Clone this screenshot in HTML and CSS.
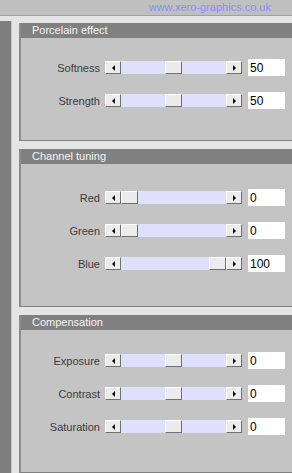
FILE: index.html
```html
<!DOCTYPE html>
<html lang="en">
<head>
    <meta charset="UTF-8">
    <meta name="viewport" content="width=device-width, initial-scale=1.0">
    <title>Porcelain</title>
    <link rel="stylesheet" href="styles.css">
</head>
<body>
    <div class="topbar">
        <span class="site">www.xero-graphics.co.uk</span>
    </div>
    <div class="frame">
        <div class="sidebar"></div>
        <div class="panels">

            <div class="section porcelain">
                <div class="section-title">Porcelain effect</div>
                <div class="rows">
                    <div class="row">
                        <label>Softness</label>
                        <div class="slider">
                            <span class="arrow left"></span>
                            <div class="track"><span class="thumb" style="left: 44px"></span></div>
                            <span class="arrow right"></span>
                        </div>
                        <input type="text" value="50">
                    </div>
                    <div class="row">
                        <label>Strength</label>
                        <div class="slider">
                            <span class="arrow left"></span>
                            <div class="track"><span class="thumb" style="left: 44px"></span></div>
                            <span class="arrow right"></span>
                        </div>
                        <input type="text" value="50">
                    </div>
                </div>
            </div>

            <div class="section channel">
                <div class="section-title">Channel tuning</div>
                <div class="rows">
                    <div class="row">
                        <label>Red</label>
                        <div class="slider">
                            <span class="arrow left"></span>
                            <div class="track"><span class="thumb" style="left: 0px"></span></div>
                            <span class="arrow right"></span>
                        </div>
                        <input type="text" value="0">
                    </div>
                    <div class="row">
                        <label>Green</label>
                        <div class="slider">
                            <span class="arrow left"></span>
                            <div class="track"><span class="thumb" style="left: 0px"></span></div>
                            <span class="arrow right"></span>
                        </div>
                        <input type="text" value="0">
                    </div>
                    <div class="row">
                        <label>Blue</label>
                        <div class="slider">
                            <span class="arrow left"></span>
                            <div class="track"><span class="thumb" style="left: 88px"></span></div>
                            <span class="arrow right"></span>
                        </div>
                        <input type="text" value="100">
                    </div>
                </div>
            </div>

            <div class="section compensation">
                <div class="section-title">Compensation</div>
                <div class="rows">
                    <div class="row">
                        <label>Exposure</label>
                        <div class="slider">
                            <span class="arrow left"></span>
                            <div class="track"><span class="thumb" style="left: 44px"></span></div>
                            <span class="arrow right"></span>
                        </div>
                        <input type="text" value="0">
                    </div>
                    <div class="row">
                        <label>Contrast</label>
                        <div class="slider">
                            <span class="arrow left"></span>
                            <div class="track"><span class="thumb" style="left: 44px"></span></div>
                            <span class="arrow right"></span>
                        </div>
                        <input type="text" value="0">
                    </div>
                    <div class="row">
                        <label>Saturation</label>
                        <div class="slider">
                            <span class="arrow left"></span>
                            <div class="track"><span class="thumb" style="left: 44px"></span></div>
                            <span class="arrow right"></span>
                        </div>
                        <input type="text" value="0">
                    </div>
                </div>
            </div>

        </div>
    </div>
</body>
</html>
```

FILE: styles.css
```css
* {
    box-sizing: border-box;
}
body {
    margin: 0;
    width: 292px;
    height: 473px;
    overflow: hidden;
    font-family: 'Liberation Sans', Arial, sans-serif;
    background-color: #c0c0c0;
}
.topbar {
    height: 16px;
    border-bottom: 1px solid #a0a0a0;
    display: flex;
    justify-content: flex-end;
    padding-right: 21px;
}
.site {
    font-size: 11px;
    line-height: 15px;
    color: #8c8cff;
}
.frame {
    display: flex;
    padding-top: 5px;
    background-color: #e4e4e4;
    height: 457px;
}
.sidebar {
    width: 11px;
    background-color: #7e7e7e;
}
.panels {
    flex: 1;
    padding-top: 2px;
    padding-left: 7px;
    border-left: 1px solid #c4c4c4;
}
.section {
    background-color: #c4c4c4;
    border-left: 2px solid #8c8c8c;
    border-bottom: 1px solid #808080;
    margin-bottom: 8px;
}
.porcelain {
    height: 118px;
}
.channel {
    height: 158px;
}
.compensation {
    height: 158px;
    margin-bottom: 0;
}
.section-title {
    height: 15px;
    line-height: 15px;
    padding-left: 11px;
    background-color: #808080;
    color: #f4f4f4;
    font-size: 11px;
}
.rows {
    display: flex;
    flex-direction: column;
    gap: 16px;
    padding-top: 21px;
}
.channel .rows {
    padding-top: 25px;
}
.compensation .rows {
    padding-top: 22px;
}
.row {
    display: flex;
    align-items: center;
    height: 17px;
}
.row label {
    width: 79px;
    text-align: right;
    font-size: 11px;
    color: #3c3c3c;
}
.slider {
    display: flex;
    align-items: center;
    width: 137px;
    height: 13px;
    margin-left: 5px;
}
.arrow {
    width: 16px;
    height: 13px;
    background-color: #ececec;
    border: 1px solid;
    border-color: #ffffff #707070 #707070 #ffffff;
    display: flex;
    align-items: center;
    justify-content: center;
}
.arrow::after {
    content: "";
    border-top: 3px solid transparent;
    border-bottom: 3px solid transparent;
}
.arrow.left::after {
    border-right: 3px solid #000;
}
.arrow.right::after {
    border-left: 3px solid #000;
}
.track {
    position: relative;
    flex: 1;
    height: 13px;
    background-color: #e0e0fc;
}
.thumb {
    position: absolute;
    top: 0;
    width: 17px;
    height: 13px;
    background-color: #ececec;
    border: 1px solid;
    border-color: #ffffff #707070 #707070 #ffffff;
}
input[type="text"] {
    width: 37px;
    height: 17px;
    margin-left: 6px;
    padding: 0 2px;
    border: none;
    background-color: #ffffff;
    font-family: 'Liberation Sans', Arial, sans-serif;
    font-size: 12px;
    color: #000;
    outline: none;
}
```
